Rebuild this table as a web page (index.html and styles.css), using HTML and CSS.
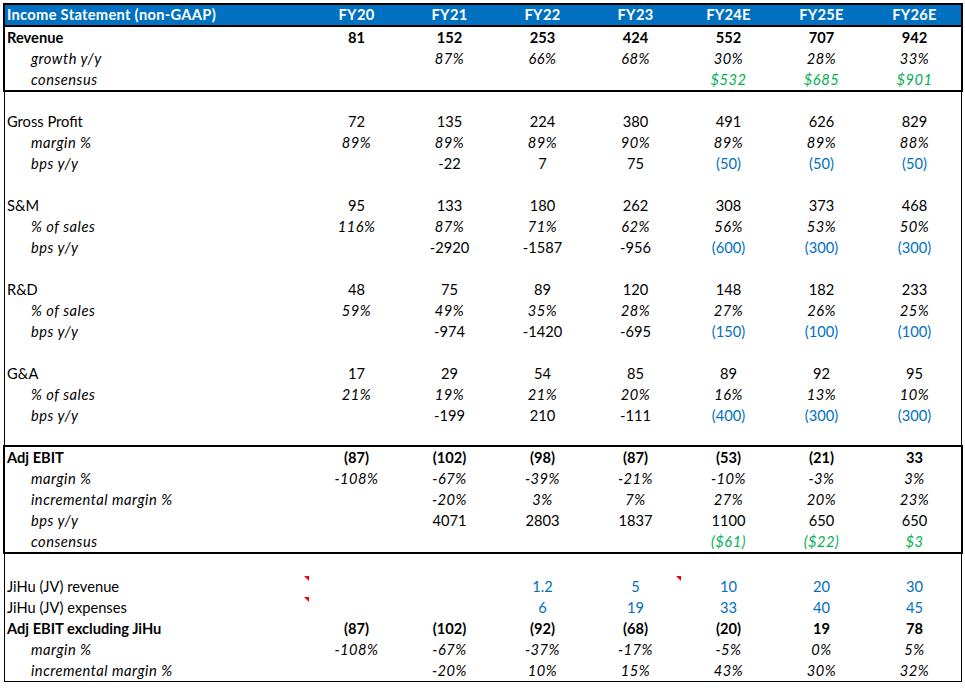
FILE: index.html
```html
<!DOCTYPE html>
<html>
<head>
<meta charset="utf-8">
<link rel="stylesheet" href="styles.css">
</head>
<body>
<div class="sheet">
  <section class="box thick">
    <div class="row head">
      <div class="lbl">Income Statement (non-GAAP)</div>
      <div>FY20</div><div>FY21</div><div>FY22</div><div>FY23</div><div>FY24E</div><div>FY25E</div><div>FY26E</div>
    </div>
    <div class="row bold">
      <div class="lbl">Revenue</div>
      <div>81</div><div>152</div><div>253</div><div>424</div><div>552</div><div>707</div><div>942</div>
    </div>
    <div class="row it">
      <div class="lbl sub">growth y/y</div>
      <div></div><div>87%</div><div>66%</div><div>68%</div><div>30%</div><div>28%</div><div>33%</div>
    </div>
    <div class="row it">
      <div class="lbl sub">consensus</div>
      <div></div><div></div><div></div><div></div><div class="green">$532</div><div class="green">$685</div><div class="green">$901</div>
    </div>
  </section>

  <section class="box thin">
    <div class="gap gap-a"></div>
    <div class="row">
      <div class="lbl">Gross Profit</div>
      <div>72</div><div>135</div><div>224</div><div>380</div><div>491</div><div>626</div><div>829</div>
    </div>
    <div class="row it">
      <div class="lbl sub">margin %</div>
      <div>89%</div><div>89%</div><div>89%</div><div>90%</div><div>89%</div><div>89%</div><div>88%</div>
    </div>
    <div class="row">
      <div class="lbl sub it">bps y/y</div>
      <div></div><div>-22</div><div>7</div><div>75</div><div class="blue">(50)</div><div class="blue">(50)</div><div class="blue">(50)</div>
    </div>
    <div class="gap"></div>
    <div class="row">
      <div class="lbl">S&amp;M</div>
      <div>95</div><div>133</div><div>180</div><div>262</div><div>308</div><div>373</div><div>468</div>
    </div>
    <div class="row it">
      <div class="lbl sub">% of sales</div>
      <div>116%</div><div>87%</div><div>71%</div><div>62%</div><div>56%</div><div>53%</div><div>50%</div>
    </div>
    <div class="row">
      <div class="lbl sub it">bps y/y</div>
      <div></div><div>-2920</div><div>-1587</div><div>-956</div><div class="blue">(600)</div><div class="blue">(300)</div><div class="blue">(300)</div>
    </div>
    <div class="gap"></div>
    <div class="row">
      <div class="lbl">R&amp;D</div>
      <div>48</div><div>75</div><div>89</div><div>120</div><div>148</div><div>182</div><div>233</div>
    </div>
    <div class="row it">
      <div class="lbl sub">% of sales</div>
      <div>59%</div><div>49%</div><div>35%</div><div>28%</div><div>27%</div><div>26%</div><div>25%</div>
    </div>
    <div class="row">
      <div class="lbl sub it">bps y/y</div>
      <div></div><div>-974</div><div>-1420</div><div>-695</div><div class="blue">(150)</div><div class="blue">(100)</div><div class="blue">(100)</div>
    </div>
    <div class="gap"></div>
    <div class="row">
      <div class="lbl">G&amp;A</div>
      <div>17</div><div>29</div><div>54</div><div>85</div><div>89</div><div>92</div><div>95</div>
    </div>
    <div class="row it">
      <div class="lbl sub">% of sales</div>
      <div>21%</div><div>19%</div><div>21%</div><div>20%</div><div>16%</div><div>13%</div><div>10%</div>
    </div>
    <div class="row">
      <div class="lbl sub it">bps y/y</div>
      <div></div><div>-199</div><div>210</div><div>-111</div><div class="blue">(400)</div><div class="blue">(300)</div><div class="blue">(300)</div>
    </div>
    <div class="gap gap-a"></div>
  </section>

  <section class="box thick">
    <div class="row bold">
      <div class="lbl">Adj EBIT</div>
      <div>(87)</div><div>(102)</div><div>(98)</div><div>(87)</div><div>(53)</div><div>(21)</div><div>33</div>
    </div>
    <div class="row it">
      <div class="lbl sub">margin %</div>
      <div>-108%</div><div>-67%</div><div>-39%</div><div>-21%</div><div>-10%</div><div>-3%</div><div>3%</div>
    </div>
    <div class="row it">
      <div class="lbl sub">incremental margin %</div>
      <div></div><div>-20%</div><div>3%</div><div>7%</div><div>27%</div><div>20%</div><div>23%</div>
    </div>
    <div class="row">
      <div class="lbl sub it">bps y/y</div>
      <div></div><div>4071</div><div>2803</div><div>1837</div><div>1100</div><div>650</div><div>650</div>
    </div>
    <div class="row it">
      <div class="lbl sub">consensus</div>
      <div></div><div></div><div></div><div></div><div class="green">($61)</div><div class="green">($22)</div><div class="green">$3</div>
    </div>
  </section>

  <section class="box thin last">
    <div class="gap gap-b"></div>
    <div class="row">
      <div class="lbl note">JiHu (JV) revenue</div>
      <div></div><div></div><div class="blue">1.2</div><div class="blue note">5</div><div class="blue">10</div><div class="blue">20</div><div class="blue">30</div>
    </div>
    <div class="row">
      <div class="lbl note">JiHu (JV) expenses</div>
      <div></div><div></div><div class="blue">6</div><div class="blue">19</div><div class="blue">33</div><div class="blue">40</div><div class="blue">45</div>
    </div>
    <div class="row bold">
      <div class="lbl">Adj EBIT excluding JiHu</div>
      <div>(87)</div><div>(102)</div><div>(92)</div><div>(68)</div><div>(20)</div><div>19</div><div>78</div>
    </div>
    <div class="row it">
      <div class="lbl sub">margin %</div>
      <div>-108%</div><div>-67%</div><div>-37%</div><div>-17%</div><div>-5%</div><div>0%</div><div>5%</div>
    </div>
    <div class="row it">
      <div class="lbl sub">incremental margin %</div>
      <div></div><div>-20%</div><div>10%</div><div>15%</div><div>43%</div><div>30%</div><div>32%</div>
    </div>
  </section>
</div>
</body>
</html>
```

FILE: styles.css
```css
html, body {
  margin: 0;
  padding: 0;
  background: #ffffff;
}

body {
  font-family: "Lato", "Liberation Sans", sans-serif;
  font-size: 14.67px;
  color: #000000;
}

.sheet {
  padding: 3px 0 0 3px;
  width: 960px;
}

.box {
  display: flex;
  flex-direction: column;
}

.box.thick {
  border: 2px solid #000000;
}

.box.thin {
  border-left: 1px solid #000000;
  border-right: 1px solid #000000;
  margin: 0 1px;
}

.box.last {
  border-bottom: 1px solid #000000;
}

.row {
  display: grid;
  grid-template-columns: 305px repeat(7, 93px);
  height: 21px;
  align-items: start;
  line-height: 22px;
  white-space: nowrap;
}

.row > div {
  text-align: center;
  position: relative;
  height: 21px;
}

.row > .lbl {
  text-align: left;
  padding-left: 2px;
}

.row > .lbl.sub {
  padding-left: 26px;
}

.head {
  height: 20px;
  line-height: 20px;
  background: #0070c0;
  color: #ffffff;
  font-weight: bold;
  letter-spacing: 0.3px;
  border-bottom: 2px solid #000000;
}

.head > div {
  height: 20px;
}

.bold {
  font-weight: bold;
}

.it,
.it > div {
  font-style: italic;
  letter-spacing: 0.5px;
}

.green {
  color: #00b050;
}

.blue {
  color: #0070c0;
}

.gap {
  height: 21px;
}

.gap-a {
  height: 19px;
}

.gap-b {
  height: 22px;
}

.note::after {
  content: "";
  position: absolute;
  top: 0;
  right: 1px;
  width: 0;
  height: 0;
  border-top: 5px solid #ff0000;
  border-left: 5px solid transparent;
}
```
